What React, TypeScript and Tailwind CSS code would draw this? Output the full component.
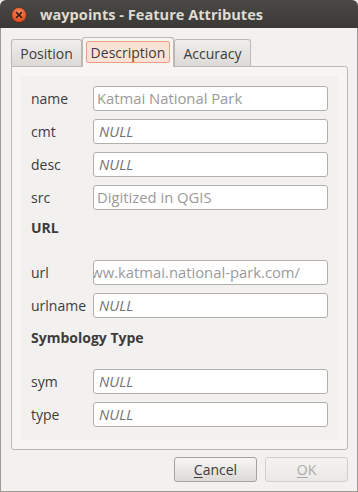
import React from "react";

const font = { fontFamily: '"Open Sans", "Noto Sans", "DejaVu Sans", sans-serif' };

function Field({ label, value, kind }: { label: string; value: string; kind: "ro" | "null" | "url" }) {
  return (
    <div className="flex items-center h-[25px]">
      <div className="w-[62px] text-[14px] text-[#3c3c3c] leading-none">{label}</div>
      <div
        className={
          "flex-1 h-[25px] bg-white border border-[#b3b0aa] rounded-[3px] flex items-center overflow-hidden whitespace-nowrap text-[14.8px] " +
          (kind === "url" ? "justify-end pr-[27px]" : kind === "null" ? "pl-[5px]" : "pl-[3px]")
        }
      >
        {kind === "null" ? (
          <span className="italic text-[14.6px] text-[#737373]">NULL</span>
        ) : (
          <span className="text-[#9a9a9a]">{value}</span>
        )}
      </div>
    </div>
  );
}

export default function App() {
  return (
    <div className="w-[358px] h-[492px] bg-[#e9e9e9] flex flex-col" style={font}>
      <div className="h-[28px] shrink-0 rounded-t-[6px] bg-gradient-to-b from-[#4a4945] to-[#3a3935] flex items-center">
        <svg width="16" height="16" viewBox="0 0 16 16" className="ml-[11px] mt-[1px]">
          <defs>
            <radialGradient id="cg" cx="50%" cy="35%" r="60%">
              <stop offset="0%" stopColor="#f58a63" />
              <stop offset="100%" stopColor="#de4a1c" />
            </radialGradient>
          </defs>
          <circle cx="8" cy="8" r="7.5" fill="url(#cg)" stroke="#3a1a10" strokeWidth="0.5" />
          <path d="M5.6 5.6 L10.4 10.4 M10.4 5.6 L5.6 10.4" stroke="#3b1c12" strokeWidth="1.5" strokeLinecap="round" />
        </svg>
        <span className="ml-[13px] text-[14.6px] font-bold text-[#dfdbd2] leading-none">
          waypoints - Feature Attributes
        </span>
      </div>
      <div className="flex-1 bg-[#f2f1f0] border-x border-b border-[#9d9b95] flex flex-col">
        <div className="flex items-end h-[38px] pl-[10px] pt-[8px]">
          <div className="w-[71px] h-[27px] border border-b-0 border-[#bcb9b3] rounded-t-[3px] bg-gradient-to-b from-[#efeeec] to-[#dcdad6] flex items-center justify-center text-[14px] text-[#3c3c3c]">
            Position
          </div>
          <div className="w-[92px] h-[30px] border border-b-0 border-[#bcb9b3] rounded-t-[3px] bg-[#f6f5f4] relative z-10 -mb-[1px] flex items-start justify-center pt-[3px]">
            <div className="w-[84px] h-[22px] bg-[#fbe2d6] border border-[#ef9f7f] rounded-[2px] flex items-center justify-center text-[14px] text-[#3c3c3c]">
              Description
            </div>
          </div>
          <div className="w-[77px] h-[27px] border border-b-0 border-[#bcb9b3] rounded-t-[3px] bg-gradient-to-b from-[#efeeec] to-[#dcdad6] flex items-center justify-center text-[14px] text-[#3c3c3c]">
            Accuracy
          </div>
        </div>
        <div className="ml-[10px] mr-[9px] h-[384px] border border-[#bcb9b3] rounded-[3px] rounded-tl-none bg-[#f6f5f4] p-[9px]">
          <div className="h-full bg-[#f2f1f0] pt-[10px] pl-[10px] pr-[10px] flex flex-col">
            <div className="flex flex-col gap-[8px]">
              <Field label="name" value="Katmai National Park" kind="ro" />
              <Field label="cmt" value="" kind="null" />
              <Field label="desc" value="" kind="null" />
              <Field label="src" value="Digitized in QGIS" kind="ro" />
            </div>
            <div className="mt-[8px] h-[18px] flex items-center text-[14px] font-bold text-[#3c3c3c]">URL</div>
            <div className="mt-[24px] flex flex-col gap-[8px]">
              <Field label="url" value="www.katmai.national-park.com/" kind="url" />
              <Field label="urlname" value="" kind="null" />
            </div>
            <div className="mt-[10px] h-[18px] flex items-center text-[14px] font-bold text-[#3c3c3c]">Symbology Type</div>
            <div className="mt-[23px] flex flex-col gap-[8px]">
              <Field label="sym" value="" kind="null" />
              <Field label="type" value="" kind="null" />
            </div>
          </div>
        </div>
        <div className="flex justify-end gap-[8px] mt-[7px] pr-[9px]">
          <div className="w-[83px] h-[25px] border border-[#a5a29c] rounded-[3px] bg-gradient-to-b from-[#f7f6f5] to-[#dddbd7] flex items-center justify-center text-[14px] text-[#3c3c3c]">
            <span><span className="underline underline-offset-2">C</span>ancel</span>
          </div>
          <div className="w-[83px] h-[25px] border border-[#d2cfca] rounded-[3px] bg-gradient-to-b from-[#f4f3f2] to-[#eae9e7] flex items-center justify-center text-[14px] text-[#ababab]">
            <span><span className="underline underline-offset-2">O</span>K</span>
          </div>
        </div>
      </div>
    </div>
  );
}
